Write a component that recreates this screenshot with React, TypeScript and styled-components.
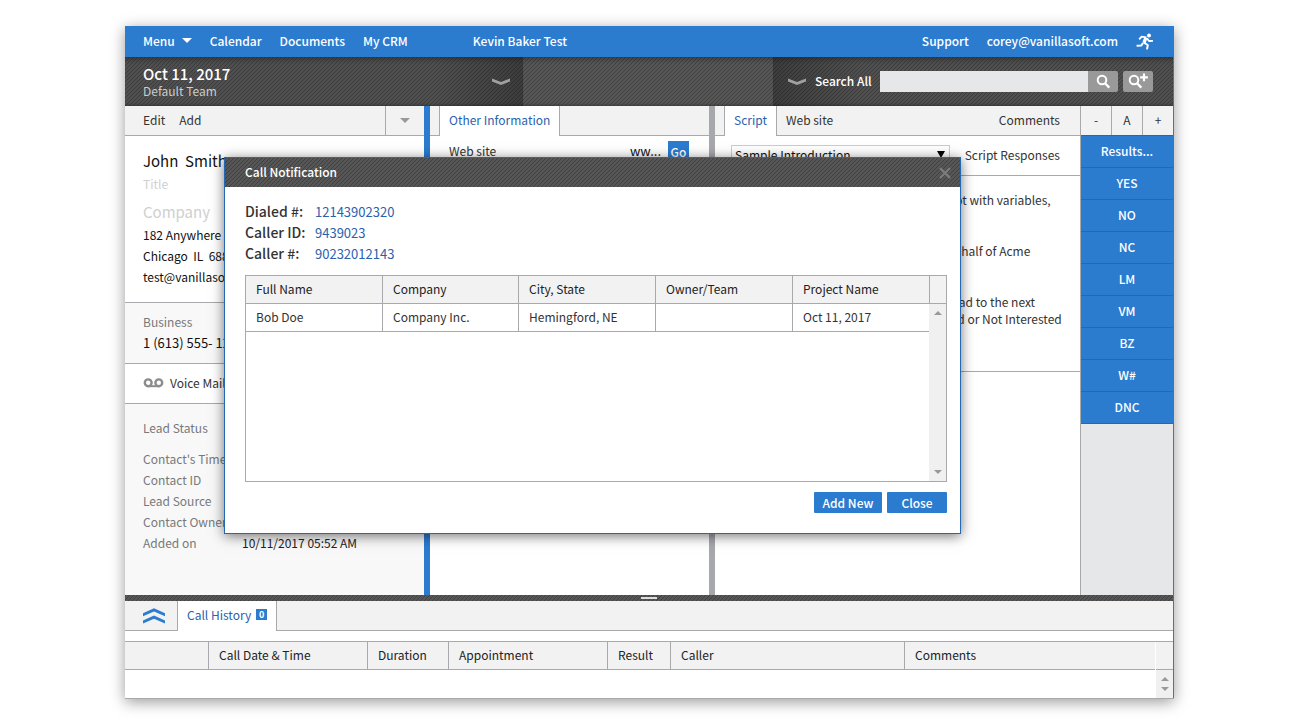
import React from "react";
import styled, { createGlobalStyle, css } from "styled-components";

const color = {
  blue: "#2b7bcf",
  blueLine: "#2268b5",
  link: "#2a62ae",
  line: "#a7a9ac",
  bar: "#f2f2f2",
  soft: "#f8f8f8",
  text: "#333333",
  muted: "#77787b",
  faint: "#cfcfcf",
};

const Global = createGlobalStyle`
  *, *::before, *::after { box-sizing: border-box; }
  body { margin: 0; background: #fff; }
  body, button, input, select, table {
    font-family: "Noto Sans CJK SC", "Noto Sans", sans-serif;
    font-size: 12px;
    line-height: 21px;
    color: ${color.text};
  }
  button { border: 0; padding: 0 0 2px; background: none; cursor: pointer; }
  a { color: inherit; text-decoration: none; }
  p, h1, h2, dl, dd, dt { margin: 0; font-weight: 400; }
`;

const stripes = css`
  background-color: #505050;
  background-image: linear-gradient(
    135deg,
    #404040 17%,
    #565656 17%,
    #565656 50%,
    #404040 50%,
    #404040 67%,
    #565656 67%
  );
  background-size: 4px 4px;
`;

const Page = styled.div`
  position: relative;
  display: flex;
  min-height: 100vh;
  padding: 26px 126px 26px 125px;
`;

const Window = styled.main`
  flex: 1;
  min-width: 0;
  display: flex;
  flex-direction: column;
  background: #fff;
  border-bottom: 1px solid ${color.line};
  box-shadow: 0 3px 14px rgba(0, 0, 0, 0.4);
`;

const TopBar = styled.nav`
  display: flex;
  align-items: center;
  gap: 18px;
  height: 31px;
  padding: 0 20px 0 18px;
  background: ${color.blue};
  color: #fff;
`;

const TopLink = styled.a<{ $indent?: boolean; $push?: boolean }>`
  display: flex;
  align-items: center;
  gap: 7px;
  padding-bottom: 2px;
  color: #fff;
  font-weight: 500;
  ${(p) => p.$indent && "margin-left: 47px;"}
  ${(p) => p.$push && "margin-left: auto;"}
`;

const LogOut = styled.a`
  display: flex;
`;

const Caret = styled.span<{ $up?: boolean; $color?: string }>`
  width: 0;
  height: 0;
  border: 5px solid transparent;
  border-top: 5px solid ${(p) => p.$color || "#999"};
  border-bottom: 0;
  ${(p) => p.$up && "transform: rotate(180deg);"}
`;

const SmallCaret = styled(Caret)`
  border-width: 4px;
  border-bottom-width: 0;
`;

const Body = styled.div`
  flex: 1;
  display: flex;
  flex-direction: column;
  border-right: 1px solid ${color.blue};
`;

const Header = styled.header`
  display: grid;
  grid-template-columns: minmax(0, 398fr) 250px minmax(0, 400fr);
  height: 49px;
  ${stripes}
`;

const HeaderPart = styled.div<{ $shade?: "left" | "right" }>`
  display: flex;
  align-items: center;
  padding: 0 12px 0 18px;
  box-shadow: inset 0 7px 6px -6px rgba(0, 0, 0, 0.45), inset 0 -3px 3px -2px rgba(0, 0, 0, 0.3);
  ${(p) =>
    p.$shade &&
    `background: linear-gradient(to ${p.$shade}, rgba(0,0,0,0.08) 0, rgba(0,0,0,0.08) calc(100% - 90px), rgba(0,0,0,0.3) 100%);`}
  ${(p) => p.$shade === "left" && "padding: 0 20px 0 14px; gap: 8px;"}
`;

const Project = styled.div`
  flex: 1;
  display: flex;
  flex-direction: column;
`;

const ProjectDate = styled.h1`
  font-size: 15px;
  line-height: 17px;
  font-weight: 500;
  color: #fff;
`;

const Team = styled.span`
  line-height: 17px;
  color: #cdcdcd;
`;

const SearchLabel = styled.label`
  padding-bottom: 2px;
  color: #fff;
  font-weight: 500;
`;

const SearchField = styled.div`
  flex: 1;
  display: flex;
`;

const SearchInput = styled.input`
  flex: 1;
  min-width: 0;
  height: 21px;
  border: 0;
  padding: 0 6px;
  background: #e6e7e8;
  outline: none;
`;

const SearchButton = styled.button<{ $apart?: boolean }>`
  width: 30px;
  height: 21px;
  padding: 0;
  display: flex;
  align-items: center;
  justify-content: center;
  border-radius: 0 2px 2px 0;
  background: #999;
  ${(p) => p.$apart && "margin-left: 5px; border-radius: 2px;"}
`;

const Columns = styled.div`
  flex: 1;
  display: grid;
  grid-template-columns: minmax(0, 299fr) 6px minmax(0, 279fr) 6px minmax(0, 366fr) 92px;
`;

const Column = styled.section<{ $line?: boolean }>`
  display: flex;
  flex-direction: column;
  min-width: 0;
  ${(p) => p.$line && `border-right: 1px solid ${color.line};`}
`;

const Splitter = styled.div<{ $active?: boolean }>`
  background: ${(p) => (p.$active ? color.blue : "#a7a8ac")};
`;

const ToolBar = styled.div`
  display: flex;
  height: 30px;
  background: ${color.bar};
`;

const BarSpace = styled.div<{ $width?: number }>`
  ${(p) => (p.$width ? `width: ${p.$width}px;` : "flex: 1;")}
  border-bottom: 1px solid ${color.line};
`;

const BarActions = styled.div`
  flex: 1;
  display: flex;
  gap: 14px;
  padding-left: 18px;
  border-bottom: 1px solid ${color.line};
`;

const BarCell = styled.button`
  display: flex;
  align-items: center;
  justify-content: center;
  width: 39px;
  padding: 0;
  border-left: 1px solid ${color.line};
  border-bottom: 1px solid ${color.line};
`;

const Tab = styled.button<{ $active?: boolean; $end?: boolean }>`
  display: flex;
  align-items: center;
  gap: 5px;
  padding: 0 9px 2px;
  border-bottom: 1px solid ${color.line};
  ${(p) =>
    p.$active &&
    `background: #fff; color: ${color.link}; border: 1px solid ${color.line}; border-width: 0 1px; padding-bottom: 3px;`}
  ${(p) => p.$end && "padding-right: 20px;"}
`;

const Card = styled.div<{ $soft?: boolean; $last?: boolean }>`
  padding: 8px 18px 10px;
  background: ${(p) => (p.$soft ? color.soft : "#fff")};
  border-bottom: 1px solid ${color.line};
  ${(p) => p.$last && "flex: 1; border-bottom: 0; padding-top: 13px;"}
`;

const Identity = styled(Card)`
  padding-top: 12px;
  padding-bottom: 15px;
  color: #111;
  white-space: pre;
`;

const Name = styled.h2`
  font-size: 15px;
  line-height: 26px;
`;

const Placeholder = styled.p<{ $large?: boolean }>`
  color: ${color.faint};
  line-height: 20px;
  ${(p) => p.$large && "margin-top: 6px; font-size: 15px; line-height: 24px;"}
`;

const Muted = styled.p`
  color: ${color.muted};
`;

const Phone = styled.p`
  font-size: 13px;
  color: #111;
`;

const VoiceMail = styled.button`
  display: flex;
  align-items: center;
  gap: 6px;
  padding: 0;
`;

const Details = styled.dl`
  display: grid;
  grid-template-columns: 99px 1fr;
  white-space: nowrap;
  dt { color: ${color.muted}; }
  dd { color: #222; }
  dt:first-child, dd:nth-child(2) { margin-bottom: 10px; }
`;

const SiteRow = styled.div`
  display: flex;
  gap: 7px;
  padding: 5px 20px 5px 19px;
  line-height: 19px;
`;

const SiteLabel = styled.span`
  flex: 1;
`;

const SiteValue = styled.span`
  font-size: 13px;
  color: #111;
`;

const GoButton = styled.button`
  width: 21px;
  height: 21px;
  background: ${color.blue};
  color: #fff;
  font-weight: 500;
`;

const ScriptTools = styled.div`
  display: flex;
  align-items: center;
  gap: 15px;
  height: 40px;
  padding: 0 20px 0 16px;
  border-bottom: 1px solid ${color.line};
`;

const ResponsesLink = styled.a`
  padding-bottom: 2px;
`;

const SelectBox = styled.div`
  position: relative;
  flex: 1;
  display: flex;
`;

const ScriptSelect = styled.select`
  width: 100%;
  height: 22px;
  padding: 0 3px 2px;
  border: 1px solid #ccc;
  border-radius: 0;
  background: #fff;
  color: #111;
  line-height: 18px;
  appearance: none;
`;

const SelectArrow = styled.span`
  position: absolute;
  right: 5px;
  top: 6px;
  border: 4px solid transparent;
  border-top: 7px solid #000;
  border-bottom: 0;
  pointer-events: none;
`;

const ScriptText = styled.div`
  display: flex;
  flex-direction: column;
  gap: 17px;
  height: 196px;
  padding: 15px 10px 0 20px;
  border-bottom: 1px solid ${color.line};
  line-height: 17px;
  white-space: pre-line;
`;

const Results = styled.aside`
  display: flex;
  flex-direction: column;
  background: #e6e7e8;
`;

const FontSizes = styled.div`
  display: grid;
  grid-template-columns: 30px 31px 31px;
  height: 29px;
  background: ${color.bar};
`;

const FontSizeButton = styled.button`
  border-left: 1px solid ${color.line};
  &:first-child { border-left: 0; }
`;

const ResultButton = styled.button`
  height: 32px;
  background: ${color.blue};
  border-bottom: 1px solid ${color.blueLine};
  color: #fff;
  font-weight: 500;
  &:first-of-type { height: 33px; border-top: 1px solid ${color.blueLine}; }
`;

const ResultList = styled.div`
  display: flex;
  flex-direction: column;
`;

const DarkSplitter = styled.div`
  display: flex;
  justify-content: center;
  align-items: center;
  height: 6px;
  ${stripes}
`;

const Grip = styled.span`
  width: 16px;
  height: 2px;
  background: #ddd;
`;

const Expand = styled.button`
  width: 52px;
  display: flex;
  align-items: center;
  justify-content: center;
  padding: 0 0 0 6px;
  border-bottom: 1px solid ${color.line};
`;

const Badge = styled.span`
  width: 11px;
  height: 11px;
  background: ${color.blue};
  color: #fff;
  font-size: 9px;
  line-height: 11px;
  font-weight: 700;
  text-align: center;
`;

const GridFrame = styled.div<{ $boxed?: boolean }>`
  display: grid;
  grid-template-columns: minmax(0, 1fr) 17px;
  border-top: 1px solid ${color.line};
  ${(p) =>
    p.$boxed
      ? `border: 1px solid ${color.line}; height: 207px;`
      : "height: 57px; margin-top: 10px; column-gap: 1px;"}
`;

const DataTable = styled.table`
  width: 100%;
  table-layout: fixed;
  border-collapse: separate;
  border-spacing: 0;
  align-self: start;
  th, td {
    height: 28px;
    padding: 0 10px 2px;
    border-bottom: 1px solid ${color.line};
    border-right: 1px solid ${color.line};
    font-weight: 400;
    text-align: left;
  }
  th { background: ${color.bar}; color: #222; }
  th:last-child, td:last-child { border-right: 0; }
`;

const Col = styled.col<{ $w?: number }>`
  ${(p) => p.$w && `width: ${p.$w}px;`}
`;

const Side = styled.div`
  display: flex;
  flex-direction: column;
`;

const SideHead = styled.div<{ $line?: boolean }>`
  height: 28px;
  background: ${color.bar};
  border-bottom: 1px solid ${color.line};
  ${(p) => p.$line && `border-left: 1px solid ${color.line};`}
`;

const ScrollBar = styled.div`
  flex: 1;
  display: flex;
  flex-direction: column;
  justify-content: space-between;
  align-items: center;
  padding: 7px 0;
  background: #f0f0f0;
`;

const Dialog = styled.div`
  position: absolute;
  left: 224px;
  top: 157px;
  width: 737px;
  background: #fff;
  border: 1px solid ${color.blueLine};
  box-shadow: 0 2px 12px rgba(0, 0, 0, 0.55);
`;

const DialogHead = styled.div`
  display: flex;
  align-items: center;
  justify-content: space-between;
  height: 29px;
  padding: 0 9px 0 20px;
  ${stripes}
`;

const DialogTitle = styled.h2`
  padding-bottom: 2px;
  color: #fff;
  font-size: 12px;
  font-weight: 500;
`;

const CloseIcon = styled.button`
  display: flex;
  padding: 0;
`;

const DialogBody = styled.div`
  padding: 14px 13px 20px 20px;
`;

const CallInfo = styled.dl`
  display: grid;
  grid-template-columns: 70px 1fr;
  margin-bottom: 11px;
  font-size: 14px;
  dt { font-weight: 500; white-space: nowrap; }
  dd { color: ${color.link}; font-size: 13px; }
`;

const DialogActions = styled.div`
  display: flex;
  justify-content: flex-end;
  gap: 5px;
  margin-top: 10px;
`;

const ActionButton = styled.button<{ $wide?: boolean }>`
  width: ${(p) => (p.$wide ? 68 : 60)}px;
  height: 21px;
  border-radius: 1px;
  background: ${color.blue};
  color: #fff;
  font-weight: 500;
`;

const Chevron = () => (
  <svg width="20" height="8" viewBox="0 0 20 8" aria-hidden="true">
    <path d="M1 0.5 L10 4 L19 0.5 V3.5 L10 7 L1 3.5Z" fill="#a0a0a0" />
  </svg>
);

const Runner = () => (
  <svg
    width="18"
    height="17"
    viewBox="0 0 18 17"
    fill="none"
    stroke="#fff"
    strokeWidth="2"
    strokeLinejoin="round"
    aria-hidden="true"
  >
    <circle cx="13" cy="2.6" r="2" fill="#fff" stroke="none" />
    <path d="M3.2 6.4 L5.6 3.6 L10.4 4.4" strokeWidth="1.8" />
    <path d="M10 4.6 L7.9 9.8" strokeWidth="3.4" />
    <path d="M11 5.2 L13 8 L17 7.8" strokeWidth="1.8" />
    <path d="M7.8 9.6 L11.8 12 L11 16.4" />
    <path d="M7 10 L5.2 12.6 L0.6 12.7" />
  </svg>
);

const Magnifier = ({ plus }: { plus?: boolean }) => (
  <svg width="22" height="17" viewBox="0 0 22 17" fill="none" stroke="#fff" aria-hidden="true">
    <g transform={plus ? "translate(-3 0)" : undefined}>
      <circle cx="10" cy="7" r="4.3" strokeWidth="2" />
      <path d="M12.8 10 L17.3 14.6" strokeWidth="2.4" />
    </g>
    {plus && <path d="M17 0.4 V8.2 M13.1 4.3 H20.9" strokeWidth="2.2" />}
  </svg>
);

const Tape = () => (
  <svg width="21" height="10" viewBox="0 0 21 10" fill="none" stroke="#8c8c8c" strokeWidth="2.4" aria-hidden="true">
    <circle cx="5.2" cy="4.8" r="3.4" />
    <circle cx="15.8" cy="4.8" r="3.4" />
    <path d="M5.2 8.2 H15.8" strokeWidth="2" />
  </svg>
);

const DoubleChevron = () => (
  <svg width="24" height="16" viewBox="0 0 24 16" fill={color.blue} aria-hidden="true">
    <path d="M1 5.2 L12 0.3 L23 5.2 V8.2 L12 3.5 L1 8.2Z" />
    <path d="M1 12.4 L12 7.5 L23 12.4 V15.4 L12 10.7 L1 15.4Z" />
  </svg>
);

const results = ["Results...", "YES", "NO", "NC", "LM", "VM", "BZ", "W#", "DNC"];

const details: [string, string][] = [
  ["Lead Status", ""],
  ["Contact's Time", ""],
  ["Contact ID", ""],
  ["Lead Source", ""],
  ["Contact Owner", ""],
  ["Added on", "10/11/2017 05:52 AM"],
];

const callInfo: [string, string][] = [
  ["Dialed #:", "12143902320"],
  ["Caller ID:", "9439023"],
  ["Caller #:", "90232012143"],
];

const matchColumns: [string, number | undefined][] = [
  ["Full Name", 137],
  ["Company", 136],
  ["City, State", 137],
  ["Owner/Team", 137],
  ["Project Name", undefined],
];
const match = ["Bob Doe", "Company Inc.", "Hemingford, NE", "", "Oct 11, 2017"];

const historyColumns: [string, number | undefined][] = [
  ["", 84],
  ["Call Date & Time", 159],
  ["Duration", 81],
  ["Appointment", 159],
  ["Result", 63],
  ["Caller", 234],
  ["Comments", undefined],
];

function Scroller() {
  return (
    <ScrollBar aria-hidden="true">
      <SmallCaret $up />
      <SmallCaret />
    </ScrollBar>
  );
}

function CallNotification() {
  return (
    <Dialog role="dialog" aria-labelledby="call-title">
      <DialogHead>
        <DialogTitle id="call-title">Call Notification</DialogTitle>
        <CloseIcon aria-label="Dismiss">
          <svg width="12" height="12" viewBox="0 0 12 12" stroke="#7c7c7c" strokeWidth="2.4">
            <path d="M1 1 L11 11 M11 1 L1 11" />
          </svg>
        </CloseIcon>
      </DialogHead>
      <DialogBody>
        <CallInfo>
          {callInfo.map(([label, value]) => (
            <React.Fragment key={label}>
              <dt>{label}</dt>
              <dd>{value}</dd>
            </React.Fragment>
          ))}
        </CallInfo>
        <GridFrame $boxed>
          <DataTable>
            <colgroup>
              {matchColumns.map(([name, w]) => <Col key={name} $w={w} />)}
            </colgroup>
            <thead>
              <tr>{matchColumns.map(([name]) => <th key={name} scope="col">{name}</th>)}</tr>
            </thead>
            <tbody>
              <tr>{match.map((cell, i) => <td key={i}>{cell}</td>)}</tr>
            </tbody>
          </DataTable>
          <Side>
            <SideHead $line />
            <Scroller />
          </Side>
        </GridFrame>
        <DialogActions>
          <ActionButton $wide>Add New</ActionButton>
          <ActionButton>Close</ActionButton>
        </DialogActions>
      </DialogBody>
    </Dialog>
  );
}

export default function App() {
  return (
    <Page>
      <Global />
      <Window>
        <TopBar>
          <TopLink href="#menu">Menu <Caret $color="#fff" /></TopLink>
          <TopLink href="#calendar">Calendar</TopLink>
          <TopLink href="#documents">Documents</TopLink>
          <TopLink href="#crm">My CRM</TopLink>
          <TopLink href="#project" $indent>Kevin Baker Test</TopLink>
          <TopLink href="#support" $push>Support</TopLink>
          <TopLink href="#account">corey@vanillasoft.com</TopLink>
          <LogOut href="#logout" aria-label="Log out"><Runner /></LogOut>
        </TopBar>
        <Body>
          <Header>
            <HeaderPart $shade="right">
              <Project>
                <ProjectDate>Oct 11, 2017</ProjectDate>
                <Team>Default Team</Team>
              </Project>
              <Chevron />
            </HeaderPart>
            <HeaderPart />
            <HeaderPart $shade="left">
              <Chevron />
              <SearchLabel htmlFor="search">Search All</SearchLabel>
              <SearchField>
                <SearchInput id="search" type="text" />
                <SearchButton aria-label="Search"><Magnifier /></SearchButton>
                <SearchButton $apart aria-label="Advanced search"><Magnifier plus /></SearchButton>
              </SearchField>
            </HeaderPart>
          </Header>
          <Columns>
            <Column>
              <ToolBar>
                <BarActions>
                  <button>Edit</button>
                  <button>Add</button>
                </BarActions>
                <BarCell aria-label="More"><Caret /></BarCell>
              </ToolBar>
              <Identity>
                <Name>John  Smith</Name>
                <Placeholder>Title</Placeholder>
                <Placeholder $large>Company</Placeholder>
                <p>182 Anywhere Ave</p>
                <p>Chicago  IL  68845</p>
                <p>test@vanillasoft.com</p>
              </Identity>
              <Card $soft>
                <Muted>Business</Muted>
                <Phone>1 (613) 555- 1234</Phone>
              </Card>
              <Card>
                <VoiceMail><Tape /> Voice Mail</VoiceMail>
              </Card>
              <Card $soft $last>
                <Details>
                  {details.map(([label, value]) => (
                    <React.Fragment key={label}>
                      <dt>{label}</dt>
                      <dd>{value}</dd>
                    </React.Fragment>
                  ))}
                </Details>
              </Card>
            </Column>
            <Splitter $active />
            <Column>
              <ToolBar>
                <BarSpace $width={9} />
                <Tab $active>Other Information</Tab>
                <BarSpace />
              </ToolBar>
              <SiteRow>
                <SiteLabel>Web site</SiteLabel>
                <SiteValue>ww...</SiteValue>
                <GoButton>Go</GoButton>
              </SiteRow>
            </Column>
            <Splitter />
            <Column $line>
              <ToolBar>
                <BarSpace $width={9} />
                <Tab $active>Script</Tab>
                <Tab>Web site</Tab>
                <BarSpace />
                <Tab $end>Comments</Tab>
              </ToolBar>
              <ScriptTools>
                <SelectBox>
                  <ScriptSelect aria-label="Script" defaultValue="Sample Introduction">
                    <option>Sample Introduction</option>
                  </ScriptSelect>
                  <SelectArrow />
                </SelectBox>
                <ResponsesLink href="#responses">Script Responses</ResponsesLink>
              </ScriptTools>
              <ScriptText>
                <p>{"Use this area to write a long sample script with variables,\nquestions and links."}</p>
                <p>{"Hello, this is Kevin and I am calling on behalf of Acme\nSoftware."}</p>
                <p>{"Select the results buttons to move the lead to the next\nstage, such as Open, Interested, Qualified or Not Interested"}</p>
              </ScriptText>
            </Column>
            <Results>
              <FontSizes>
                <FontSizeButton>-</FontSizeButton>
                <FontSizeButton>A</FontSizeButton>
                <FontSizeButton>+</FontSizeButton>
              </FontSizes>
              <ResultList>
                {results.map((r) => <ResultButton key={r}>{r}</ResultButton>)}
              </ResultList>
            </Results>
          </Columns>
          <DarkSplitter><Grip /></DarkSplitter>
          <ToolBar>
            <Expand aria-label="Expand"><DoubleChevron /></Expand>
            <Tab $active>Call History <Badge>0</Badge></Tab>
            <BarSpace />
          </ToolBar>
          <GridFrame>
            <DataTable>
              <colgroup>
                {historyColumns.map(([name, w]) => <Col key={name} $w={w} />)}
              </colgroup>
              <thead>
                <tr>{historyColumns.map(([name]) => <th key={name} scope="col">{name}</th>)}</tr>
              </thead>
            </DataTable>
            <Side>
              <SideHead />
              <Scroller />
            </Side>
          </GridFrame>
        </Body>
      </Window>
      <CallNotification />
    </Page>
  );
}
